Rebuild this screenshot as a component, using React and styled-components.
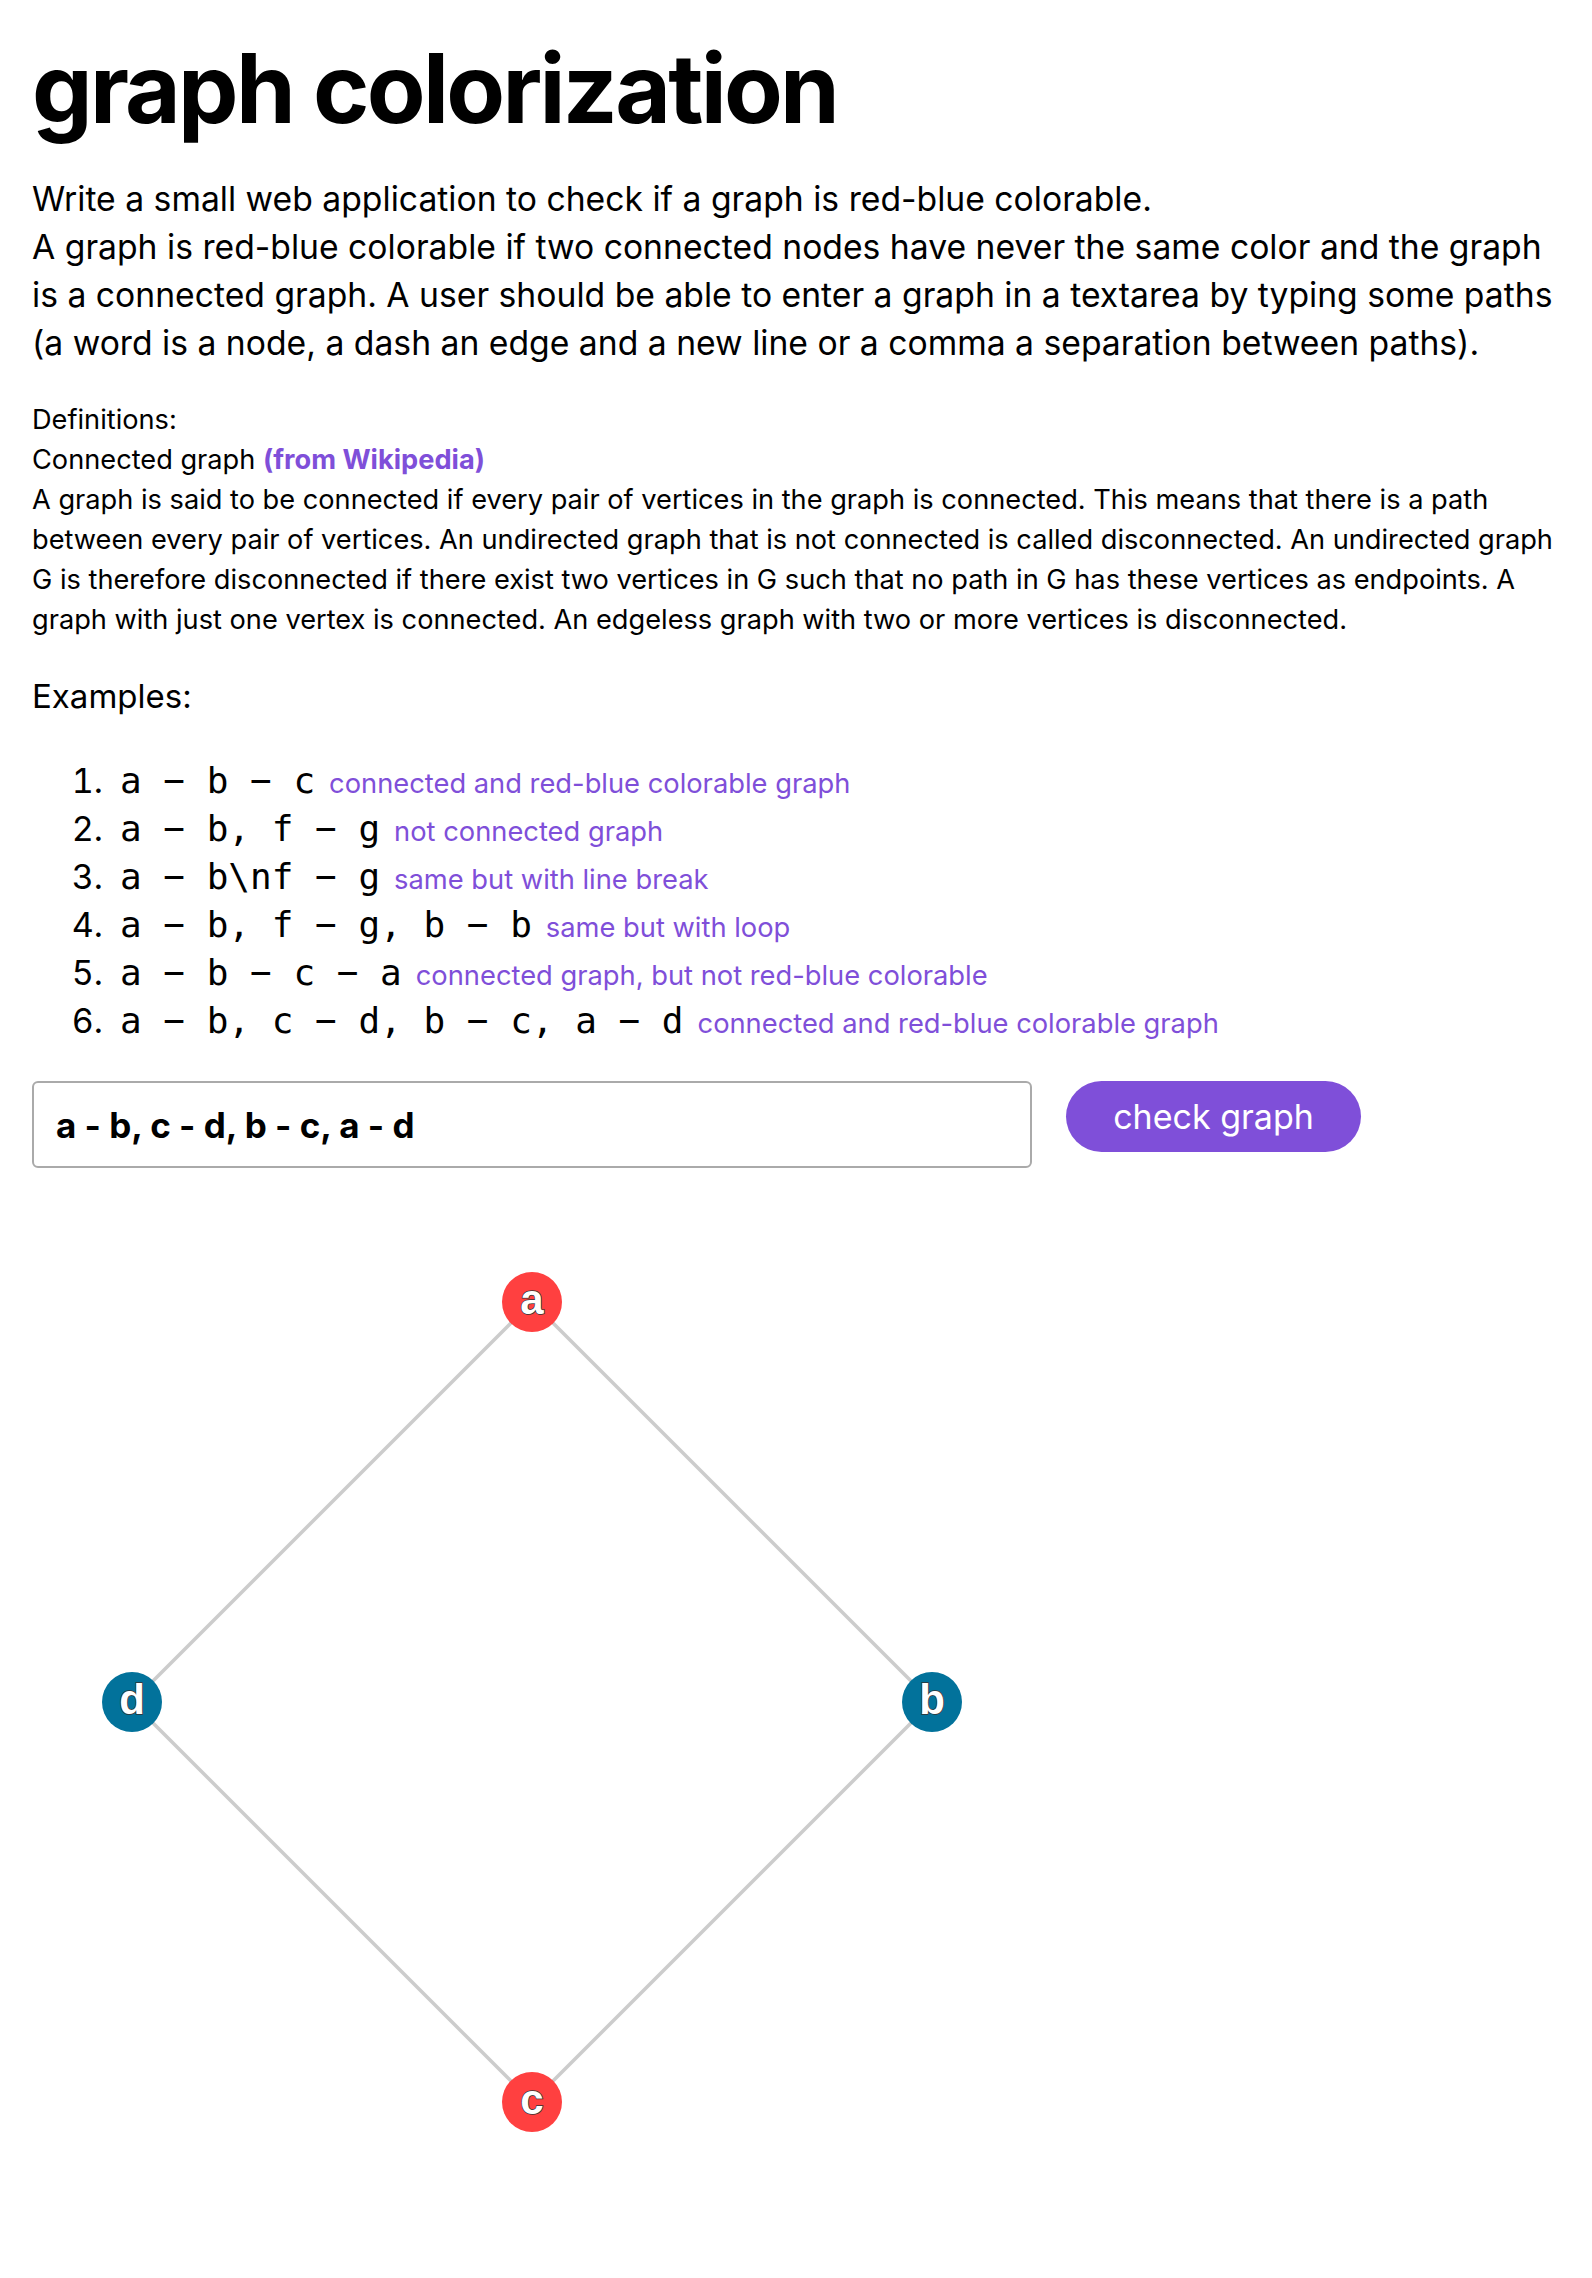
import { useMemo, useState } from "react";
import styled, { createGlobalStyle } from "styled-components";

const GlobalStyle = createGlobalStyle`
  html, body {
    margin: 0;
    padding: 0;
    background: #fff;
  }
  body {
    font-family: Inter, "Noto Sans", sans-serif;
    color: #000;
  }
`;

const Page = styled.div`
  padding: 40px 32px 60px;
  width: 1536px;
`;

const Title = styled.h1`
  margin: 0;
  font-size: 96px;
  line-height: 96px;
  font-weight: 700;
  letter-spacing: -2.7px;
`;

const Intro = styled.p`
  margin: 39px 0 0;
  font-size: 33.7px;
  line-height: 48px;
`;

const Definitions = styled.div`
  margin-top: 33px;
  font-size: 27.2px;
  line-height: 40px;
  p {
    margin: 0;
  }
`;

const Link = styled.a`
  color: #7f4fd9;
  font-weight: 700;
  text-decoration: none;
`;

const SubTitle = styled.h3`
  margin: 32px 0 0;
  font-size: 33px;
  line-height: 48px;
  font-weight: 400;
`;

const ExampleList = styled.ol`
  margin: 37px 0 0;
  padding-left: 80px;
  font-size: 34px;
  line-height: 48px;
  li {
    padding-left: 8px;
  }
`;

const Code = styled.code`
  font-family: "DejaVu Sans Mono", "Liberation Mono", monospace;
  font-size: 36px;
  line-height: 1;
`;

const Hint = styled.span`
  color: #7f4fd9;
  font-size: 27.3px;
  line-height: 1;
  margin-left: 14px;
`;

const Form = styled.form`
  margin-top: 36px;
  display: flex;
  align-items: flex-start;
  gap: 34px;
`;

const GraphInput = styled.input`
  box-sizing: border-box;
  width: 1000px;
  height: 87px;
  padding: 0 22px;
  border: 2px solid #aaa;
  border-radius: 6px;
  font-family: Inter, sans-serif;
  font-size: 35px;
  font-weight: 700;
  color: #000;
  outline: none;
`;

const Button = styled.button`
  width: 295px;
  height: 71px;
  border: none;
  border-radius: 100rem;
  background: #7f4fd9;
  color: #fff;
  font-family: Inter, sans-serif;
  font-size: 34px;
  cursor: pointer;
`;

const Canvas = styled.svg`
  display: block;
  margin-top: 34px;
  overflow: visible;
`;

const NodeLabel = styled.text`
  font-family: "Liberation Sans", Arial, sans-serif;
  font-weight: 700;
  font-size: 42px;
  fill: #fff;
  stroke: #333;
  stroke-width: 1.5px;
  paint-order: stroke;
  text-anchor: middle;
`;

// shown with a minus sign, like the monospace dash of the original page
const examples = [
  ["a − b − c", "connected and red-blue colorable graph"],
  ["a − b, f − g", "not connected graph"],
  ["a − b\\nf − g", "same but with line break"],
  ["a − b, f − g, b − b", "same but with loop"],
  ["a − b − c − a", "connected graph, but not red-blue colorable"],
  ["a − b, c − d, b − c, a − d", "connected and red-blue colorable graph"],
];

const parseGraph = (text) => {
  const nodes = [];
  const edges = [];
  text
    .split(/[\n,]/)
    .map((p) => p.split(/[-−]/).map((w) => w.trim()).filter(Boolean))
    .forEach((path) => {
      path.forEach((n) => !nodes.includes(n) && nodes.push(n));
      for (let i = 1; i < path.length; i++) edges.push([path[i - 1], path[i]]);
    });
  return { nodes, edges };
};

const colorize = ({ nodes, edges }) => {
  const colors = {};
  nodes.forEach((start) => {
    if (colors[start] !== undefined) return;
    colors[start] = 0;
    const queue = [start];
    while (queue.length) {
      const cur = queue.shift();
      edges.forEach(([x, y]) => {
        const next = x === cur ? y : y === cur ? x : null;
        if (next !== null && colors[next] === undefined) {
          colors[next] = 1 - colors[cur];
          queue.push(next);
        }
      });
    }
  });
  return colors;
};

const Graph = ({ graph }) => {
  const colors = colorize(graph);
  const pos = {};
  graph.nodes.forEach((n, i) => {
    const angle = -Math.PI / 2 + (i * 2 * Math.PI) / graph.nodes.length;
    pos[n] = { x: 500 + 400 * Math.cos(angle), y: 500 + 400 * Math.sin(angle) };
  });

  return (
    <Canvas width="1000" height="1000" viewBox="0 0 1000 1000">
      {graph.edges.map(([a, b], i) => (
        <line
          key={i}
          x1={pos[a].x}
          y1={pos[a].y}
          x2={pos[b].x}
          y2={pos[b].y}
          stroke="#cccccc"
          strokeWidth="3.5"
        />
      ))}
      {graph.nodes.map((n) => (
        <g key={n}>
          <circle
            cx={pos[n].x}
            cy={pos[n].y}
            r="30"
            fill={colors[n] === 0 ? "#ff4040" : "#02729b"}
          />
          <NodeLabel x={pos[n].x} y={pos[n].y + 12}>
            {n}
          </NodeLabel>
        </g>
      ))}
    </Canvas>
  );
};

const App = () => {
  const [value, setValue] = useState("a - b, c - d, b - c, a - d");
  const [source, setSource] = useState(value);
  const graph = useMemo(() => parseGraph(source), [source]);

  return (
    <Page>
      <GlobalStyle />
      <Title>graph colorization</Title>
      <Intro>
        Write a small web application to check if a graph is red-blue colorable.
        <br />
        A graph is red-blue colorable if two connected nodes have never the same
        color and the graph is a connected graph. A user should be able to enter
        a graph in a textarea by typing some paths (a word is a node, a dash an
        edge and a new line or a comma a separation between paths).
      </Intro>
      <Definitions>
        <p>Definitions:</p>
        <p>
          Connected graph <Link href="#">(from Wikipedia)</Link>
        </p>
        <p>
          A graph is said to be connected if every pair of vertices in the graph
          is connected. This means that there is a path between every pair of
          vertices. An undirected graph that is not connected is called
          disconnected. An undirected graph G is therefore disconnected if there
          exist two vertices in G such that no path in G has these vertices as
          endpoints. A graph with just one vertex is connected. An edgeless
          graph with two or more vertices is disconnected.
        </p>
      </Definitions>
      <SubTitle>Examples:</SubTitle>
      <ExampleList>
        {examples.map(([code, hint]) => (
          <li key={code}>
            <Code>{code}</Code>
            <Hint>{hint}</Hint>
          </li>
        ))}
      </ExampleList>
      <Form
        onSubmit={(e) => {
          e.preventDefault();
          setSource(value);
        }}
      >
        <GraphInput value={value} onChange={(e) => setValue(e.target.value)} />
        <Button type="submit">check graph</Button>
      </Form>
      <Graph graph={graph} />
    </Page>
  );
};

export default App;
